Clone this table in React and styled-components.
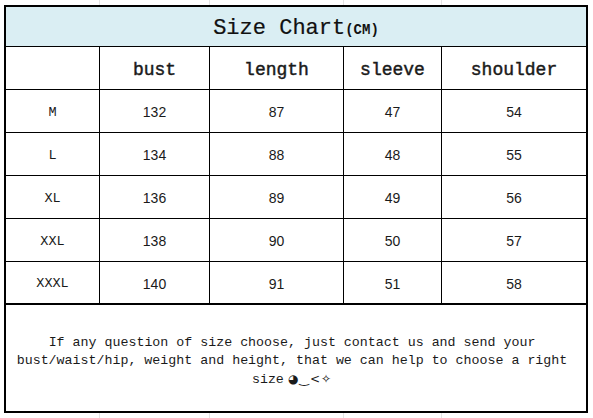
import React from "react";
import styled, { createGlobalStyle } from "styled-components";

const GlobalStyle = createGlobalStyle`
  html, body {
    margin: 0;
    padding: 0;
    background: #ffffff;
    font-family: "Liberation Sans", Arial, sans-serif;
  }
  * { box-sizing: border-box; }
`;

const Page = styled.div`
  width: 593px;
  height: 418px;
  padding: 5px 0 0 4px;
  background-color: #ffffff;
  background-image:
    linear-gradient(to right, transparent 99px, #e4e4e4 99px, #e4e4e4 100px, transparent 100px),
    linear-gradient(to right, transparent 209px, #e4e4e4 209px, #e4e4e4 210px, transparent 210px),
    linear-gradient(to right, transparent 343px, #e4e4e4 343px, #e4e4e4 344px, transparent 344px),
    linear-gradient(to right, transparent 441px, #e4e4e4 441px, #e4e4e4 442px, transparent 442px);
`;

const Chart = styled.div`
  width: 584px;
  border: 2px solid #000;
  background: #fff;
  display: flex;
  flex-direction: column;
`;

const TitleBar = styled.div`
  height: 40px;
  border-bottom: 1px solid #000;
  background: #daeef3;
  display: flex;
  align-items: center;
  justify-content: center;
  padding-top: 4px;
  color: #111;
  font-family: "Liberation Mono", "Courier New", monospace;
`;

const TitleMain = styled.span`
  font-size: 22px;
  -webkit-text-stroke: 0.2px #111;
`;

const TitleUnit = styled.span`
  font-size: 14px;
  font-weight: bold;
  padding-top: 2px;
`;

const SizeGrid = styled.div`
  display: grid;
  grid-template-columns: 93px 109px 133px 97px 144px;
  grid-template-rows: repeat(5, 42px) 41px;
  gap: 1px;
  background: #000;
`;

const Cell = styled.div`
  background: #fff;
  display: flex;
  align-items: center;
  justify-content: center;
  color: #1a1a1a;
  font-family: ${(p) =>
    p.$kind === "num"
      ? `"Liberation Sans", Arial, sans-serif`
      : `"Liberation Mono", "Courier New", monospace`};
  font-size: ${(p) =>
    p.$kind === "head" ? "18px" : p.$kind === "num" ? "14px" : "13.5px"};
  -webkit-text-stroke: ${(p) => (p.$kind === "head" ? "0.45px #1a1a1a" : "0")};
  padding-top: ${(p) => (p.$kind === "head" ? "3px" : "2px")};
`;

const Notes = styled.div`
  height: 108px;
  border-top: 2px solid #000;
  display: flex;
  align-items: center;
  justify-content: center;
  padding: 6px 8px 0 0;
`;

const NoteText = styled.p`
  margin: 0;
  text-align: center;
  font-family: "Liberation Mono", "Courier New", monospace;
  font-size: 13.3px;
  line-height: 18px;
  color: #1a1a1a;
  white-space: nowrap;
`;

const Kaomoji = styled.span`
  font-family: "DejaVu Sans", sans-serif;
  font-size: 12px;
  letter-spacing: 1px;
  margin-left: 4px;
`;

const headers = ["", "bust", "length", "sleeve", "shoulder"];
const rows = [
  ["M", 132, 87, 47, 54],
  ["L", 134, 88, 48, 55],
  ["XL", 136, 89, 49, 56],
  ["XXL", 138, 90, 50, 57],
  ["XXXL", 140, 91, 51, 58],
];

export default function App() {
  return (
    <>
      <GlobalStyle />
      <Page>
        <Chart>
          <TitleBar>
            <TitleMain>Size Chart</TitleMain>
            <TitleUnit>(CM)</TitleUnit>
          </TitleBar>
          <SizeGrid>
            {headers.map((h, i) => (
              <Cell key={`h${i}`} $kind="head">
                {h}
              </Cell>
            ))}
            {rows.map((r) =>
              r.map((v, i) => (
                <Cell key={`${r[0]}-${i}`} $kind={i === 0 ? "size" : "num"}>
                  {v}
                </Cell>
              ))
            )}
          </SizeGrid>
          <Notes>
            <NoteText>
              If any question of size choose, just contact us and send your
              <br />
              bust/waist/hip, weight and height, that we can help to choose a right
              <br />
              size<Kaomoji>◕‿&lt;✧</Kaomoji>
            </NoteText>
          </Notes>
        </Chart>
      </Page>
    </>
  );
}
